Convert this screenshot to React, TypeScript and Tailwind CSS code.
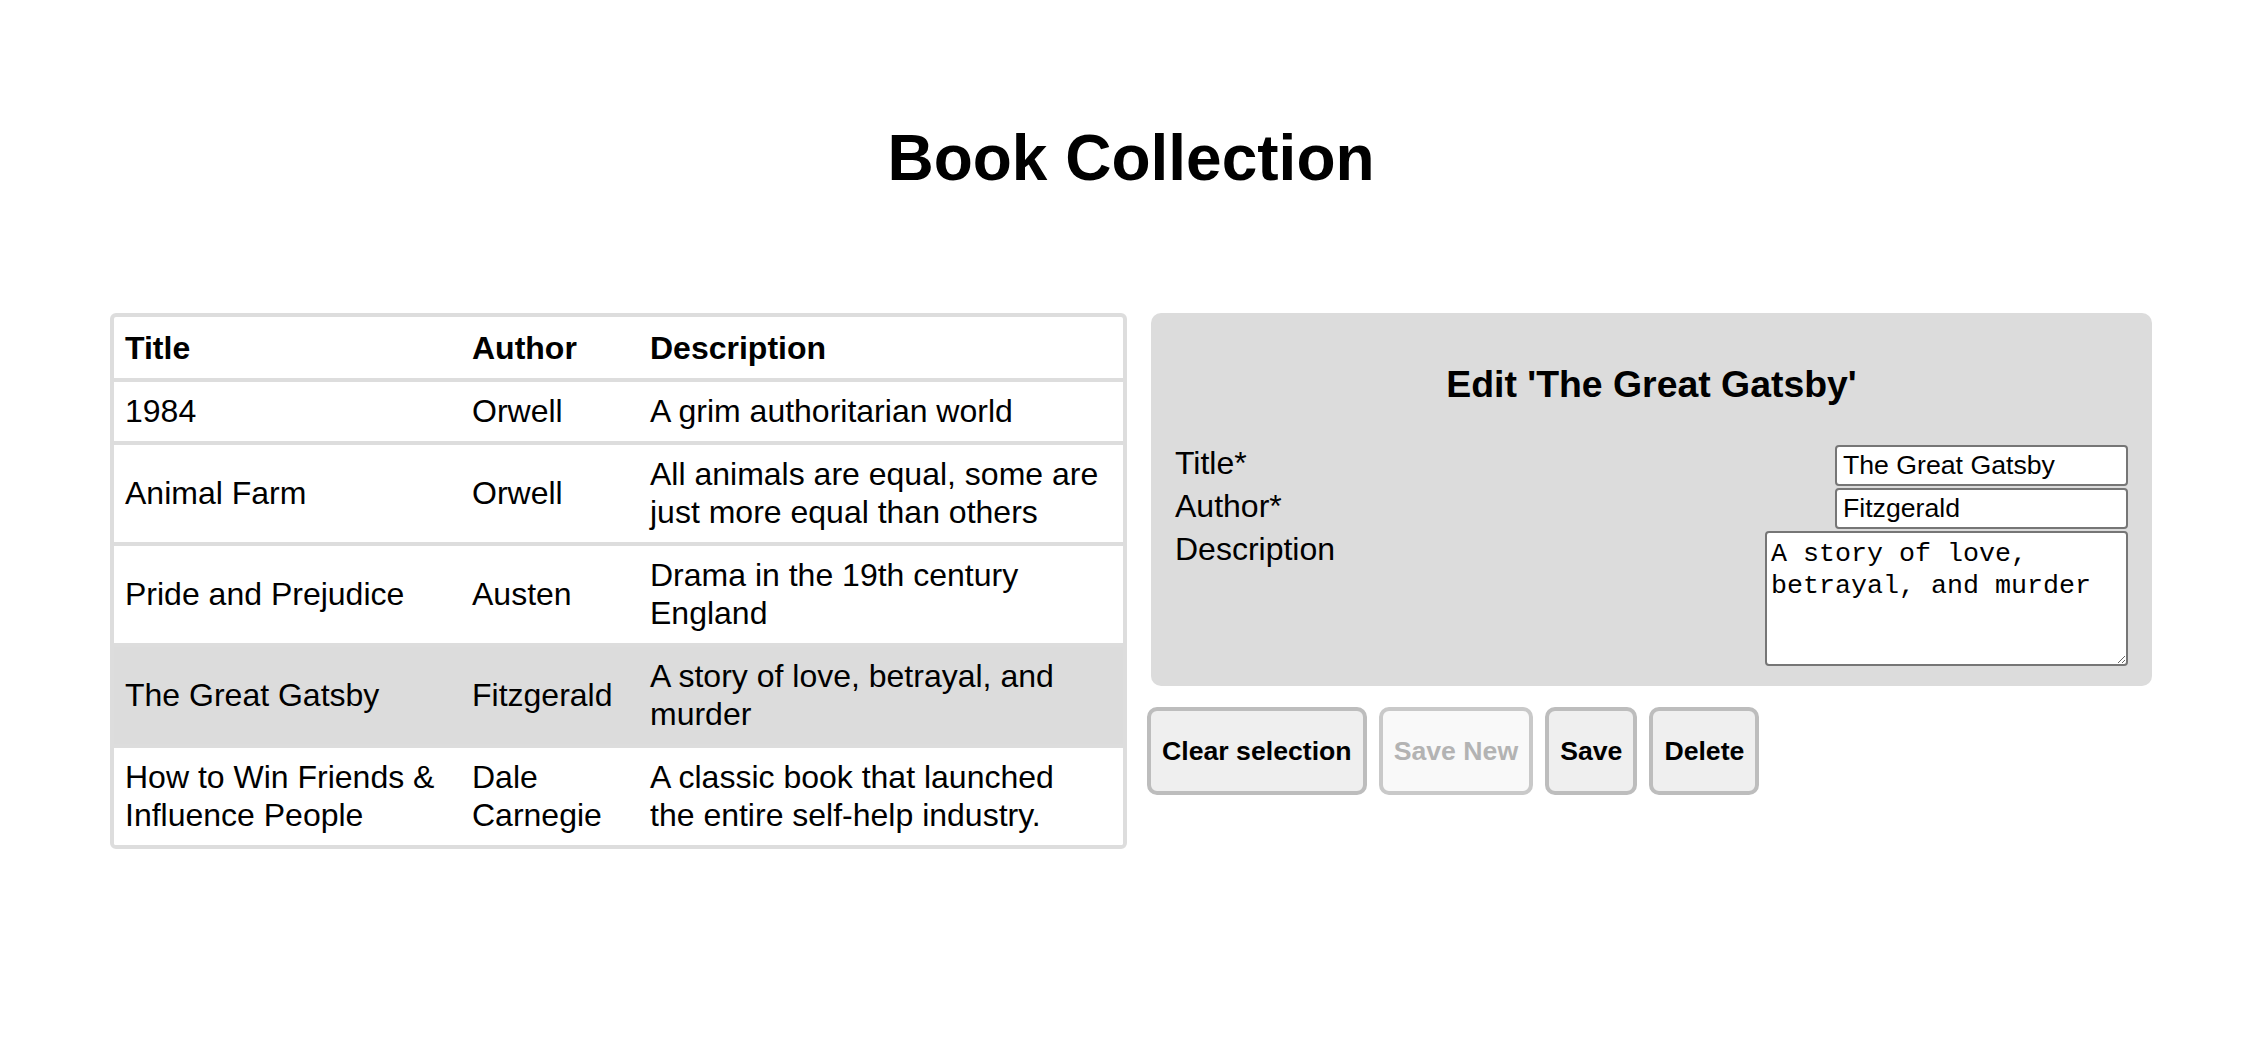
import { useState } from "react";

type Book = { id: number; title: string; author: string; description: string };

const initialBooks: Book[] = [
  { id: 1, title: "1984", author: "Orwell", description: "A grim authoritarian world" },
  {
    id: 2,
    title: "Animal Farm",
    author: "Orwell",
    description: "All animals are equal, some are just more equal than others",
  },
  { id: 3, title: "Pride and Prejudice", author: "Austen", description: "Drama in the 19th century England" },
  {
    id: 4,
    title: "The Great Gatsby",
    author: "Fitzgerald",
    description: "A story of love, betrayal, and murder",
  },
  {
    id: 5,
    title: "How to Win Friends & Influence People",
    author: "Dale Carnegie",
    description: "A classic book that launched the entire self-help industry.",
  },
];

export default function App() {
  const [books] = useState<Book[]>(initialBooks);
  const [selectedId, setSelectedId] = useState<number | null>(4);
  const selected = books.find((b) => b.id === selectedId) || null;

  const [title, setTitle] = useState(selected ? selected.title : "");
  const [author, setAuthor] = useState(selected ? selected.author : "");
  const [description, setDescription] = useState(selected ? selected.description : "");

  function selectBook(book: Book) {
    setSelectedId(book.id);
    setTitle(book.title);
    setAuthor(book.author);
    setDescription(book.description);
  }

  function clearSelection() {
    setSelectedId(null);
    setTitle("");
    setAuthor("");
    setDescription("");
  }

  const btn =
    "border-4 rounded-[10px] px-[11px] py-[24px] text-[26.67px] leading-[32px] font-bold";

  return (
    <div className="min-h-screen bg-white text-black font-['Liberation_Sans',Arial,sans-serif]">
      <div className="ml-[110px] w-[2042px] pt-[121px]">
        <h1 className="text-center text-[64px] font-bold leading-[74px]">Book Collection</h1>

        <div className="mt-[118px] flex items-start gap-[24px]">
          {/* Book table */}
          <div className="w-[1017px] border-4 border-[#dddddd] rounded-[6px] overflow-hidden">
            <table className="w-full table-fixed border-collapse text-[32px] leading-[38px]">
              <thead>
                <tr>
                  <th className="w-[347px] text-left font-bold pl-[11px] pt-[12px] pb-[11px]">Title</th>
                  <th className="w-[178px] text-left font-bold pl-[11px] pt-[12px] pb-[11px]">Author</th>
                  <th className="text-left font-bold pl-[11px] pr-[20px] pt-[12px] pb-[11px]">Description</th>
                </tr>
              </thead>
              <tbody>
                {books.map((book) => (
                  <tr
                    key={book.id}
                    onClick={() => selectBook(book)}
                    className={
                      "border-t-4 border-[#dddddd] cursor-pointer " +
                      (book.id === selectedId ? "bg-[#dcdcdc]" : "bg-white")
                    }
                  >
                    <td className="pl-[11px] pr-[11px] pt-[10px] pb-[11px] align-middle">{book.title}</td>
                    <td className="pl-[11px] pr-[11px] pt-[10px] pb-[11px] align-middle">{book.author}</td>
                    <td className="pl-[11px] pr-[20px] pt-[10px] pb-[11px] align-middle">{book.description}</td>
                  </tr>
                ))}
              </tbody>
            </table>
          </div>

          {/* Edit panel */}
          <div className="w-[1001px] flex flex-col">
            <div className="bg-[#dcdcdc] rounded-[10px] pt-[50px] px-[24px] pb-[20px]">
              <h3 className="text-center text-[37.4px] font-bold leading-[43px] mb-[39px]">
                {selected ? `Edit '${selected.title}'` : "New book"}
              </h3>

              <div className="flex items-start justify-between h-[43px]">
                <label className="text-[32px] leading-[37px]">Title*</label>
                <input
                  value={title}
                  onChange={(e) => setTitle(e.target.value)}
                  className="w-[293px] h-[41px] bg-white border-2 border-[#767676] rounded-[4px] px-[6px] text-[26.67px] outline-none"
                />
              </div>
              <div className="flex items-start justify-between h-[43px]">
                <label className="text-[32px] leading-[37px]">Author*</label>
                <input
                  value={author}
                  onChange={(e) => setAuthor(e.target.value)}
                  className="w-[293px] h-[41px] bg-white border-2 border-[#767676] rounded-[4px] px-[6px] text-[26.67px] outline-none"
                />
              </div>
              <div className="flex items-start justify-between">
                <label className="text-[32px] leading-[37px]">Description</label>
                <textarea
                  value={description}
                  onChange={(e) => setDescription(e.target.value)}
                  className="w-[363px] h-[135px] bg-white border-2 border-[#767676] rounded-[4px] px-[4px] pt-[5px] text-[26.67px] leading-[32px] font-['Liberation_Mono',monospace] outline-none"
                />
              </div>
            </div>

            <div className="mt-[21px] -ml-[4px] flex gap-[12px]">
              <button onClick={clearSelection} className={btn + " bg-[#efefef] border-[#bdbdbd] text-black"}>
                Clear selection
              </button>
              <button disabled className={btn + " bg-[#f9f9f9] border-[#c9c9c9] text-[#b3b3b3]"}>
                Save New
              </button>
              <button className={btn + " bg-[#efefef] border-[#bdbdbd] text-black"}>Save</button>
              <button className={btn + " bg-[#efefef] border-[#bdbdbd] text-black"}>Delete</button>
            </div>
          </div>
        </div>
      </div>
    </div>
  );
}
